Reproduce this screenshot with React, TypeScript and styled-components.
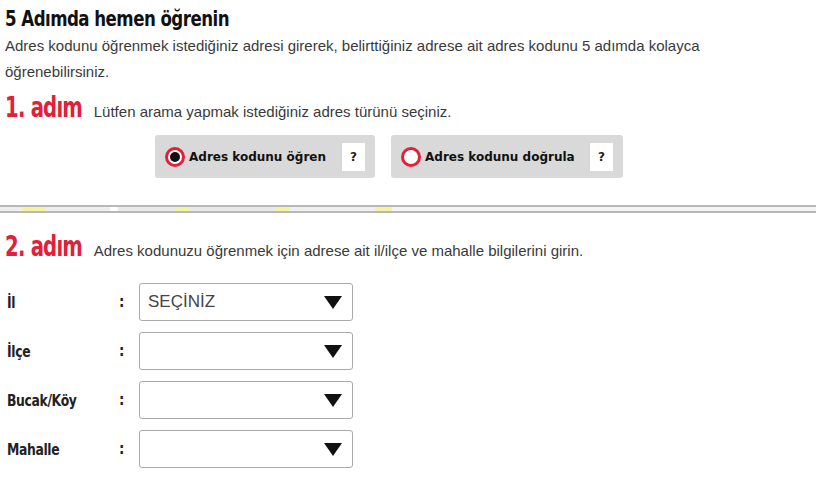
import React from "react";
import styled, { createGlobalStyle } from "styled-components";

const GlobalStyle = createGlobalStyle`
  html, body {
    margin: 0;
    padding: 0;
    background: #fff;
  }
  body {
    font-family: "Liberation Sans", Arial, sans-serif;
    color: #333;
  }
`;

const condensed = `"DejaVu Sans Condensed", "DejaVu Sans", sans-serif`;

const Page = styled.div`
  width: 816px;
  height: 477px;
  overflow: hidden;
  padding: 6px 0 0 0;
  box-sizing: border-box;
`;

const Section = styled.section`
  padding: 0 0 0 5px;
`;

const Title = styled.h1`
  display: inline-block;
  margin: 0;
  font-family: ${condensed};
  font-stretch: condensed;
  font-weight: bold;
  font-size: 21px;
  line-height: 26px;
  letter-spacing: -0.6px;
  color: #111;
  transform: scaleX(0.88);
  transform-origin: left center;
`;

const Intro = styled.p`
  margin: 1px 0 0 0;
  width: 740px;
  font-size: 15px;
  line-height: 26px;
  color: #3a3a3a;
`;

const StepRow = styled.div<{ $top: number }>`
  display: flex;
  align-items: baseline;
  gap: 11px;
  margin-top: ${(p) => p.$top}px;
`;

const StepNo = styled.span`
  display: inline-block;
  font-family: ${condensed};
  font-stretch: condensed;
  font-weight: bold;
  font-size: 28px;
  line-height: 28px;
  letter-spacing: -1px;
  color: #e2203a;
  transform: scaleX(0.78);
  transform-origin: left center;
  margin-right: -21px;
`;

const StepText = styled.span`
  font-size: 15px;
  color: #3a3a3a;
`;

const Choices = styled.div`
  display: flex;
  gap: 16px;
  margin: 13px 0 0 150px;
`;

const Choice = styled.div<{ $w: number }>`
  display: flex;
  align-items: center;
  height: 43px;
  padding: 0 10px 0 10px;
  background: #d9d9d9;
  border-radius: 3px;
  box-sizing: border-box;
  width: ${(p) => p.$w}px;
`;

const Radio = styled.span<{ $checked?: boolean }>`
  width: 20px;
  height: 20px;
  box-sizing: border-box;
  border-radius: 50%;
  border: 3px solid #e2203a;
  background: #fff;
  display: flex;
  align-items: center;
  justify-content: center;
  flex-shrink: 0;
  &::after {
    content: "";
    width: 10px;
    height: 10px;
    border-radius: 50%;
    background: ${(p) => (p.$checked ? "#111" : "transparent")};
  }
`;

const ChoiceLabel = styled.span`
  margin-left: 4px;
  font-family: "DejaVu Sans", Verdana, sans-serif;
  font-weight: bold;
  font-size: 12px;
  color: #111;
  flex: 1;
`;

const Help = styled.span`
  width: 23px;
  height: 28px;
  background: #fff;
  display: flex;
  align-items: center;
  justify-content: center;
  font-family: "DejaVu Sans", Verdana, sans-serif;
  font-weight: bold;
  font-size: 12px;
  color: #222;
`;

const Divider = styled.div`
  margin-top: 27px;
  height: 4px;
  border-top: 2px solid #b8b8b8;
  border-bottom: 2px solid #b8b8b8;
  background: linear-gradient(
    90deg,
    #eee 0 22px,
    #f6f3a0 22px 46px,
    #eee 46px 110px,
    #fff 110px 118px,
    #eaeaea 118px 176px,
    #f6f3a0 176px 190px,
    #e8e8e8 190px 276px,
    #f6f3a0 276px 290px,
    #f0f0f0 290px 375px,
    #f6f3a0 375px 392px,
    #f4f4f4 392px 816px
  );
`;

const Form = styled.div`
  display: flex;
  flex-direction: column;
  gap: 11px;
  margin: 22px 0 0 2px;
`;

const FieldRow = styled.div`
  display: grid;
  grid-template-columns: 112px 20px 214px;
  align-items: center;
`;

const Label = styled.label`
  display: inline-block;
  justify-self: start;
  font-family: ${condensed};
  font-stretch: condensed;
  font-weight: bold;
  font-size: 16px;
  letter-spacing: -0.4px;
  color: #222;
  transform: scaleX(0.86);
  transform-origin: left center;
`;

const Colon = styled.span`
  font-family: ${condensed};
  font-weight: bold;
  font-size: 15px;
  color: #222;
`;

const Select = styled.div`
  height: 38px;
  border: 1px solid #aaa;
  border-radius: 3px;
  display: flex;
  align-items: center;
  justify-content: space-between;
  padding: 0 10px 0 8px;
  box-sizing: border-box;
  font-size: 17px;
  color: #444;
`;

const Arrow = () => (
  <svg width="18" height="14" viewBox="0 0 18 14">
    <polygon points="0,1 18,1 9,14" fill="#111" />
  </svg>
);

const fields = [
  { label: "İl", value: "SEÇİNİZ" },
  { label: "İlçe", value: "" },
  { label: "Bucak/Köy", value: "" },
  { label: "Mahalle", value: "" },
];

const App: React.FC = () => {
  return (
    <Page>
      <GlobalStyle />
      <Section>
        <Title>5 Adımda hemen öğrenin</Title>
        <Intro>
          Adres kodunu öğrenmek istediğiniz adresi girerek, belirttiğiniz adrese ait adres kodunu 5 adımda kolayca
          öğrenebilirsiniz.
        </Intro>
        <StepRow $top={9}>
          <StepNo>1. adım</StepNo>
          <StepText>Lütfen arama yapmak istediğiniz adres türünü seçiniz.</StepText>
        </StepRow>
        <Choices>
          <Choice $w={220}>
            <Radio $checked />
            <ChoiceLabel>Adres kodunu öğren</ChoiceLabel>
            <Help>?</Help>
          </Choice>
          <Choice $w={232}>
            <Radio />
            <ChoiceLabel>Adres kodunu doğrula</ChoiceLabel>
            <Help>?</Help>
          </Choice>
        </Choices>
      </Section>
      <Divider />
      <Section>
        <StepRow $top={20}>
          <StepNo>2. adım</StepNo>
          <StepText>Adres kodunuzu öğrenmek için adrese ait il/ilçe ve mahalle bilgilerini girin.</StepText>
        </StepRow>
        <Form>
          {fields.map((f) => (
            <FieldRow key={f.label}>
              <Label>{f.label}</Label>
              <Colon>:</Colon>
              <Select>
                <span>{f.value}</span>
                <Arrow />
              </Select>
            </FieldRow>
          ))}
        </Form>
      </Section>
    </Page>
  );
};

export default App;
